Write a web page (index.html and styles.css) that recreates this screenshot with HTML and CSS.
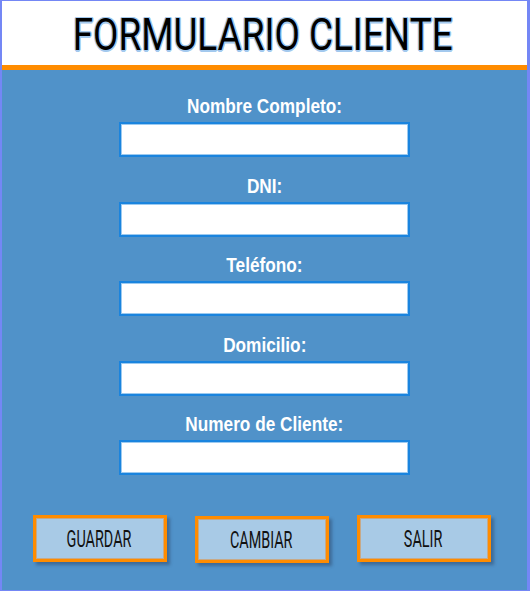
FILE: index.html
```html
<!DOCTYPE html>
<html lang="es">
<head>
    <meta charset="UTF-8">
    <meta name="viewport" content="width=device-width, initial-scale=1.0">
    <title>Formulario Cliente</title>
    <link rel="stylesheet" href="styles.css">
</head>
<body>

<div class="window">
    <div class="header">
        <h1><span>FORMULARIO CLIENTE</span></h1>
    </div>

    <div class="form-body">
        <div class="field">
            <label for="nombre"><span>Nombre Completo:</span></label>
            <input type="text" id="nombre">
        </div>
        <div class="field">
            <label for="dni"><span>DNI:</span></label>
            <input type="text" id="dni">
        </div>
        <div class="field">
            <label for="telefono"><span>Teléfono:</span></label>
            <input type="text" id="telefono">
        </div>
        <div class="field">
            <label for="domicilio"><span>Domicilio:</span></label>
            <input type="text" id="domicilio">
        </div>
        <div class="field">
            <label for="numero"><span>Numero de Cliente:</span></label>
            <input type="text" id="numero">
        </div>

        <div class="buttons">
            <button><span>GUARDAR</span></button>
            <button class="middle"><span>CAMBIAR</span></button>
            <button><span>SALIR</span></button>
        </div>
    </div>
</div>

</body>
</html>
```

FILE: styles.css
```css
body {
    margin: 0;
    font-family: "Liberation Sans", Arial, sans-serif;
}

.window {
    width: 530px;
    height: 591px;
    box-sizing: border-box;
    border: 1px solid #7487f5;
    border-left-width: 2px;
    border-right-width: 3px;
    background-color: #5092c9;
    display: flex;
    flex-direction: column;
}

.header {
    background-color: #fff;
    height: 64px;
    border-bottom: 5px solid #ff8c00;
    display: flex;
    align-items: center;
    justify-content: center;
}

.header h1 {
    margin: 0;
    font-family: Roboto, sans-serif;
    font-weight: 400;
    font-size: 45px;
    line-height: 50px;
    color: #000;
    text-shadow:
        1.5px 0 0 #a3c9ee, -1.5px 0 0 #a3c9ee,
        0 1.5px 0 #a3c9ee, 0 -1.5px 0 #a3c9ee,
        1px 1px 0 #a3c9ee, -1px -1px 0 #a3c9ee,
        1px -1px 0 #a3c9ee, -1px 1px 0 #a3c9ee;
    position: relative;
    top: 2px;
    left: -2px;
}

.header h1 span {
    display: inline-block;
    transform: scaleX(0.82);
}

.form-body {
    padding-top: 22px;
    display: flex;
    flex-direction: column;
    align-items: center;
}

.field {
    display: flex;
    flex-direction: column;
    align-items: center;
    margin-bottom: 14.5px;
}

.field label {
    color: #fff;
    font-weight: bold;
    font-size: 21px;
    line-height: 24px;
    margin-top: 2px;
    margin-bottom: 4px;
}

.field label span {
    display: inline-block;
    transform: scaleX(0.82);
}

.field input {
    width: 291px;
    height: 35px;
    box-sizing: border-box;
    border: 2px solid #1a84de;
    box-shadow: inset 0 0 0 1px #9ccaf0;
    background-color: #fff;
    margin: 0;
    padding: 0 6px;
}

.buttons {
    margin-top: 25.5px;
    display: flex;
    gap: 28px;
    margin-right: 6px;
}

.buttons button {
    width: 134px;
    height: 47px;
    box-sizing: border-box;
    border: 3px solid #ff8c00;
    background-color: #a8cae6;
    box-shadow: inset 0 0 0 1px #c7a988, 3px 3px 3px rgba(40, 60, 90, 0.45);
    font-family: Roboto, sans-serif;
    font-size: 24px;
    color: #111;
    padding: 0;
    cursor: pointer;
}

.buttons button span {
    display: inline-block;
    transform: scaleX(0.6);
}

.buttons .middle {
    margin-top: 1px;
}
```
